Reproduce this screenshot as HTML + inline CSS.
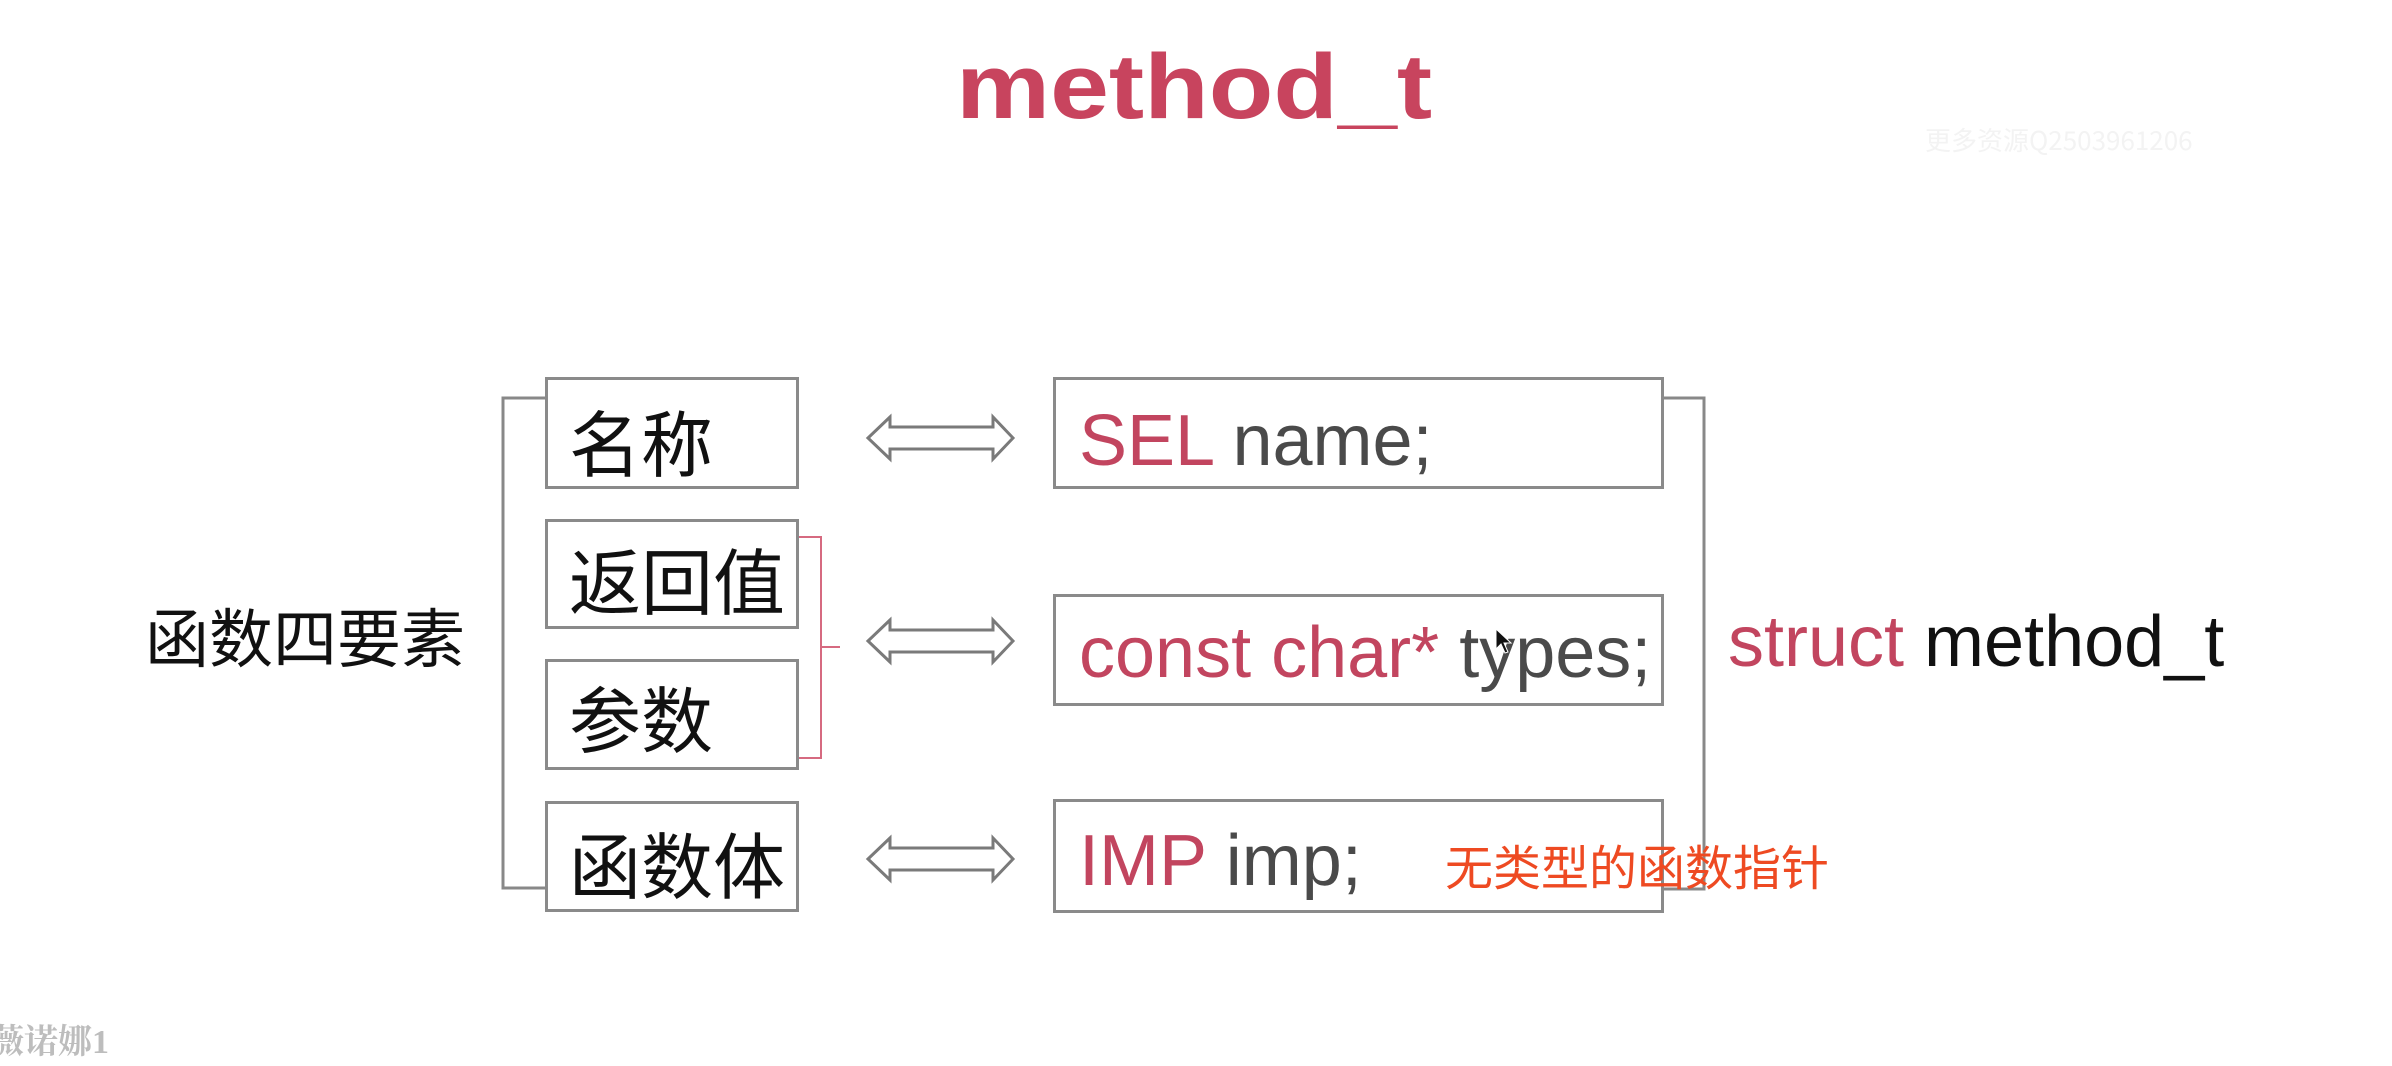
<!DOCTYPE html>
<html><head><meta charset="utf-8"><style>
body{margin:0;width:2392px;height:1066px;background:#fff;position:relative;overflow:hidden;font-family:"Liberation Sans","Noto Sans CJK SC",sans-serif}
.a{position:absolute;white-space:nowrap;line-height:1}
.box{position:absolute;border:3px solid #8a8a8a;box-sizing:border-box;background:#fff}
.r{color:#c2455f}.g{color:#4a4a4a}
.cj{font-family:"Noto Sans CJK SC",sans-serif;color:#111}
</style></head><body>
<div class="a" style="left:956px;top:41px;font-size:92px;font-weight:bold;color:#c8445e;transform:scaleX(1.15);transform-origin:left">method_t</div>
<div class="a" style="left:1925px;top:127px;font-size:26px;color:#f3f3f3;font-family:'Noto Sans CJK SC',sans-serif">更多资源Q2503961206</div>

<svg style="position:absolute;left:0;top:0" width="2392" height="1066">
<path d="M545,398 L503,398 L503,888 L545,888" fill="none" stroke="#888" stroke-width="3"/>
<path d="M1663,398 L1704,398 L1704,889 L1663,889" fill="none" stroke="#888" stroke-width="3"/>
<path d="M798,537 L821,537 L821,647 L840,647 M821,647 L821,758 L798,758" fill="none" stroke="#d66a80" stroke-width="2"/>
<g fill="none" stroke="#7a7a7a" stroke-width="3" stroke-linejoin="miter">
<path transform="translate(868,417)" d="M0,21 L22,0 L22,10 L125,10 L125,0 L145,21 L125,42 L125,32 L22,32 L22,42 Z"/>
<path transform="translate(868,620)" d="M0,21 L22,0 L22,10 L125,10 L125,0 L145,21 L125,42 L125,32 L22,32 L22,42 Z"/>
<path transform="translate(868,838)" d="M0,21 L22,0 L22,10 L125,10 L125,0 L145,21 L125,42 L125,32 L22,32 L22,42 Z"/>
</g>
</svg>

<div class="box" style="left:545px;top:377px;width:254px;height:112px"></div>
<div class="box" style="left:545px;top:519px;width:254px;height:110px"></div>
<div class="box" style="left:545px;top:659px;width:254px;height:111px"></div>
<div class="box" style="left:545px;top:801px;width:254px;height:111px"></div>
<div class="box" style="left:1053px;top:377px;width:611px;height:112px"></div>
<div class="box" style="left:1053px;top:594px;width:611px;height:112px"></div>
<div class="box" style="left:1053px;top:799px;width:611px;height:114px"></div>

<div class="a cj" style="left:569px;top:404px;font-size:72px">名称</div>
<div class="a cj" style="left:569px;top:542px;font-size:72px">返回值</div>
<div class="a cj" style="left:569px;top:680px;font-size:72px">参数</div>
<div class="a cj" style="left:569px;top:826px;font-size:72px">函数体</div>
<div class="a cj" style="left:145px;top:603px;font-size:64px">函数四要素</div>

<div class="a" style="left:1079px;top:405px;font-size:72px"><span class="r">SEL</span> <span class="g">name;</span></div>
<div class="a" style="left:1079px;top:617px;font-size:72px"><span class="r">const char*</span> <span class="g">types;</span></div>
<div class="a" style="left:1079px;top:825px;font-size:72px"><span class="r">IMP</span> <span class="g">imp;</span></div>
<div class="a" style="left:1728px;top:606px;font-size:72px"><span class="r">struct</span> <span style="color:#111">method_t</span></div>
<div class="a" style="left:1445px;top:840px;font-size:48px;color:#ee4a22;font-family:'Noto Sans CJK SC',sans-serif">无类型的函数指针</div>
<svg style="position:absolute;left:1494px;top:627px" width="20" height="30"><path d="M2,2 L2,22 L7,17 L11,26 L14,25 L10,16 L17,16 Z" fill="#111" stroke="#fff" stroke-width="1"/></svg>

<div class="a" style="left:-10px;top:1026px;font-size:34px;font-weight:bold;color:#bdbdbd;font-family:'Liberation Serif','Noto Serif CJK SC',serif">薇诺娜1</div>
</body></html>
